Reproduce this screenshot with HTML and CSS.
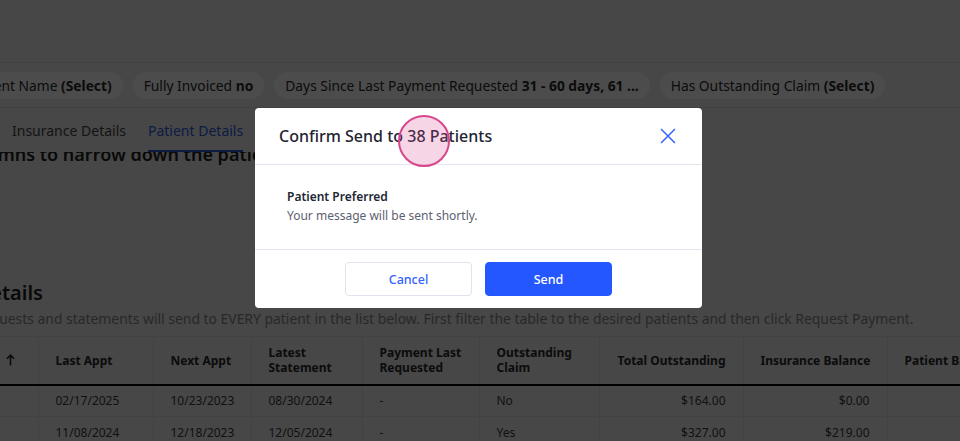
FILE: index.html
```html
<!DOCTYPE html>
<html lang="en">
<head>
<meta charset="utf-8">
<title>Request Payment</title>
<link rel="stylesheet" href="styles.css">
</head>
<body>
<div class="app">
  <header class="topbar"></header>
  <div class="filters">
    <div class="chips">
      <span class="chip">Patient Name <b>(Select)</b></span>
      <span class="chip">Fully Invoiced <b>no</b></span>
      <span class="chip">Days Since Last Payment Requested <b>31 - 60 days, 61 ...</b></span>
      <span class="chip">Has Outstanding Claim <b>(Select)</b></span>
    </div>
  </div>
  <nav class="tabs">
    <span class="tab">Insurance Details</span>
    <span class="tab active">Patient Details</span>
  </nav>
  <main class="content">
    <h2 class="intro">Use the filter columns to narrow down the patients you want to contact.</h2>
    <section class="details">
      <h2 class="details-title">Patient Details</h2>
      <p class="details-desc">Payment requests and statements will send to EVERY patient in the list below. First filter the table to the desired patients and then click Request Payment.</p>
      <table class="grid">
        <colgroup>
          <col class="c-name"><col class="c-115"><col class="c-98"><col class="c-111"><col class="c-117"><col class="c-120"><col class="c-144"><col class="c-144"><col class="c-150">
        </colgroup>
        <thead>
          <tr>
            <th class="sort"><div class="sort-inner"><span>Patient Name</span><svg class="arrow" width="9" height="12" viewBox="0 0 9 12"><path d="M4.5 11.5V1.2M1 4.6L4.5 1.1L8 4.6" fill="none" stroke="currentColor" stroke-width="1.6"/></svg></div></th>
            <th>Last Appt</th>
            <th>Next Appt</th>
            <th>Latest<br>Statement</th>
            <th>Payment Last<br>Requested</th>
            <th>Outstanding<br>Claim</th>
            <th>Total Outstanding</th>
            <th>Insurance Balance</th>
            <th>Patient Balance</th>
          </tr>
        </thead>
        <tbody>
          <tr>
            <td>Abbott, Maria</td><td>02/17/2025</td><td>10/23/2023</td><td>08/30/2024</td><td>-</td><td>No</td><td class="num">$164.00</td><td class="num">$0.00</td><td class="num">$164.00</td>
          </tr>
          <tr>
            <td>Adams, Kevin</td><td>11/08/2024</td><td>12/18/2023</td><td>12/05/2024</td><td>-</td><td>Yes</td><td class="num">$327.00</td><td class="num">$219.00</td><td class="num">$108.00</td>
          </tr>
        </tbody>
      </table>
    </section>
  </main>
</div>

<div class="overlay">
  <div class="modal" role="dialog">
    <div class="modal-head">
      <h3 class="modal-title">Confirm Send to 38 Patients</h3>
      <svg class="close" width="16" height="16" viewBox="0 0 16 16"><path d="M1 1L15 15M15 1L1 15" fill="none" stroke="#3563ff" stroke-width="1.5"/></svg>
    </div>
    <div class="modal-body">
      <div class="pref">Patient Preferred</div>
      <div class="msg">Your message will be sent shortly.</div>
    </div>
    <div class="modal-foot">
      <button class="btn btn-ghost">Cancel</button>
      <button class="btn btn-primary">Send</button>
    </div>
    <span class="click-ring"></span>
  </div>
</div>
</body>
</html>
```
FILE: styles.css
```css
* { box-sizing: border-box; margin: 0; padding: 0; }
html, body { width: 960px; height: 441px; overflow: hidden; }
body {
  font-family: "Noto Sans", "Open Sans", sans-serif;
  background: #eeeeee;
  color: #333;
}
.app { width: 960px; height: 441px; overflow: hidden; }

.topbar { height: 63px; border-bottom: 1px solid #dadada; }

.filters {
  height: 45px;
  border-bottom: 1px solid #dadada;
  display: flex;
  align-items: center;
  overflow: hidden;
}
.chips { display: flex; gap: 10px; margin-left: -42px; white-space: nowrap; }
.chip {
  height: 27px;
  line-height: 27px;
  padding: 0 11px;
  border-radius: 14px;
  background: #fff;
  font-size: 13.8px;
  color: #2a2a2a;
}
.chip b { font-weight: 700; }

.tabs {
  height: 44px;
  display: flex;
  gap: 22px;
  padding-left: 12px;
  background: #eeeeee;
  position: relative;
  z-index: 1;
}
.tab {
  display: flex;
  align-items: center;
  font-size: 14px;
  color: #444;
  border-bottom: 2px solid transparent;
  padding-top: 2px;
}
.tab.active { color: #2c5ce6; border-bottom-color: #2a5bd7; }

.content { height: 290px; overflow: hidden; }
.intro {
  margin-top: -12px;
  margin-left: -158px;
  font-size: 18px;
  line-height: 28px;
  font-weight: 600;
  color: #1e1e1e;
  white-space: nowrap;
}
.details { margin-top: 112px; }
.details-title {
  margin-left: -100px;
  font-size: 20px;
  line-height: 26px;
  font-weight: 600;
  color: #1e1e1e;
  white-space: nowrap;
}
.details-desc {
  margin-top: 3px;
  margin-left: -84px;
  font-size: 13.9px;
  line-height: 20px;
  color: #888;
  white-space: nowrap;
}

.grid {
  margin-top: 7px;
  margin-left: -112px;
  width: 1149px;
  table-layout: fixed;
  border-collapse: collapse;
  font-size: 12px;
  color: #3a3a3a;
}
.c-name { width: 150px; }
.c-115 { width: 115px; }
.c-98 { width: 98px; }
.c-111 { width: 111px; }
.c-117 { width: 117px; }
.c-120 { width: 120px; }
.c-144 { width: 144px; }
.c-150 { width: 150px; }
.grid th {
  height: 48px;
  padding: 0 17px;
  text-align: left;
  font-weight: 700;
  font-size: 12px;
  line-height: 15px;
  color: #2a2a2a;
  border-top: 1px solid #dcdcdc;
  border-left: 1px solid #dcdcdc;
  border-bottom: 2px solid #000;
  white-space: nowrap;
}
.grid th:nth-child(7), .grid th:nth-child(8) { text-align: right; }
.grid th.sort { border-left: 0; padding-right: 23px; }
.sort-inner { display: flex; justify-content: space-between; align-items: center; }
.arrow { display: block; }
.grid td {
  height: 32px;
  padding: 0 17px;
  border-left: 1px solid #dcdcdc;
  border-bottom: 1px solid #dcdcdc;
  white-space: nowrap;
}
.grid td:first-child { border-left: 0; }
.grid td.num { text-align: right; }

.overlay {
  position: fixed;
  inset: 0;
  z-index: 10;
  background: rgba(0, 0, 0, 0.7);
  display: flex;
  justify-content: center;
  align-items: flex-start;
  padding: 108px 3px 0 0;
}
.modal {
  position: relative;
  width: 447px;
  background: #fff;
  border-radius: 4px;
}
.modal-head {
  height: 57px;
  display: flex;
  align-items: center;
  justify-content: space-between;
  padding: 0 26px 0 24px;
  border-bottom: 1px solid #e3e6ee;
}
.modal-title { font-size: 16px; font-weight: 500; color: #1f2433; }
.close { display: block; }
.modal-body {
  padding: 22px 32px 24px;
  border-bottom: 1px solid #e3e6ee;
  font-size: 12px;
  line-height: 19px;
}
.pref { font-weight: 600; color: #222733; }
.msg { color: #5b6170; }
.modal-foot {
  display: flex;
  justify-content: center;
  gap: 13px;
  padding: 12px 0;
}
.btn {
  width: 127px;
  height: 34px;
  border-radius: 4px;
  font-family: inherit;
  font-size: 12.5px;
  font-weight: 500;
  cursor: pointer;
}
.btn-ghost { background: #fff; border: 1px solid #dfe3ec; color: #3563ff; }
.btn-primary { background: #2457ff; border: 1px solid #2457ff; color: #fff; }

.click-ring {
  position: absolute;
  left: 143px;
  top: 7px;
  width: 52px;
  height: 52px;
  border-radius: 50%;
  border: 2px solid #d8468c;
  background: rgba(216, 70, 140, 0.22);
}
```
